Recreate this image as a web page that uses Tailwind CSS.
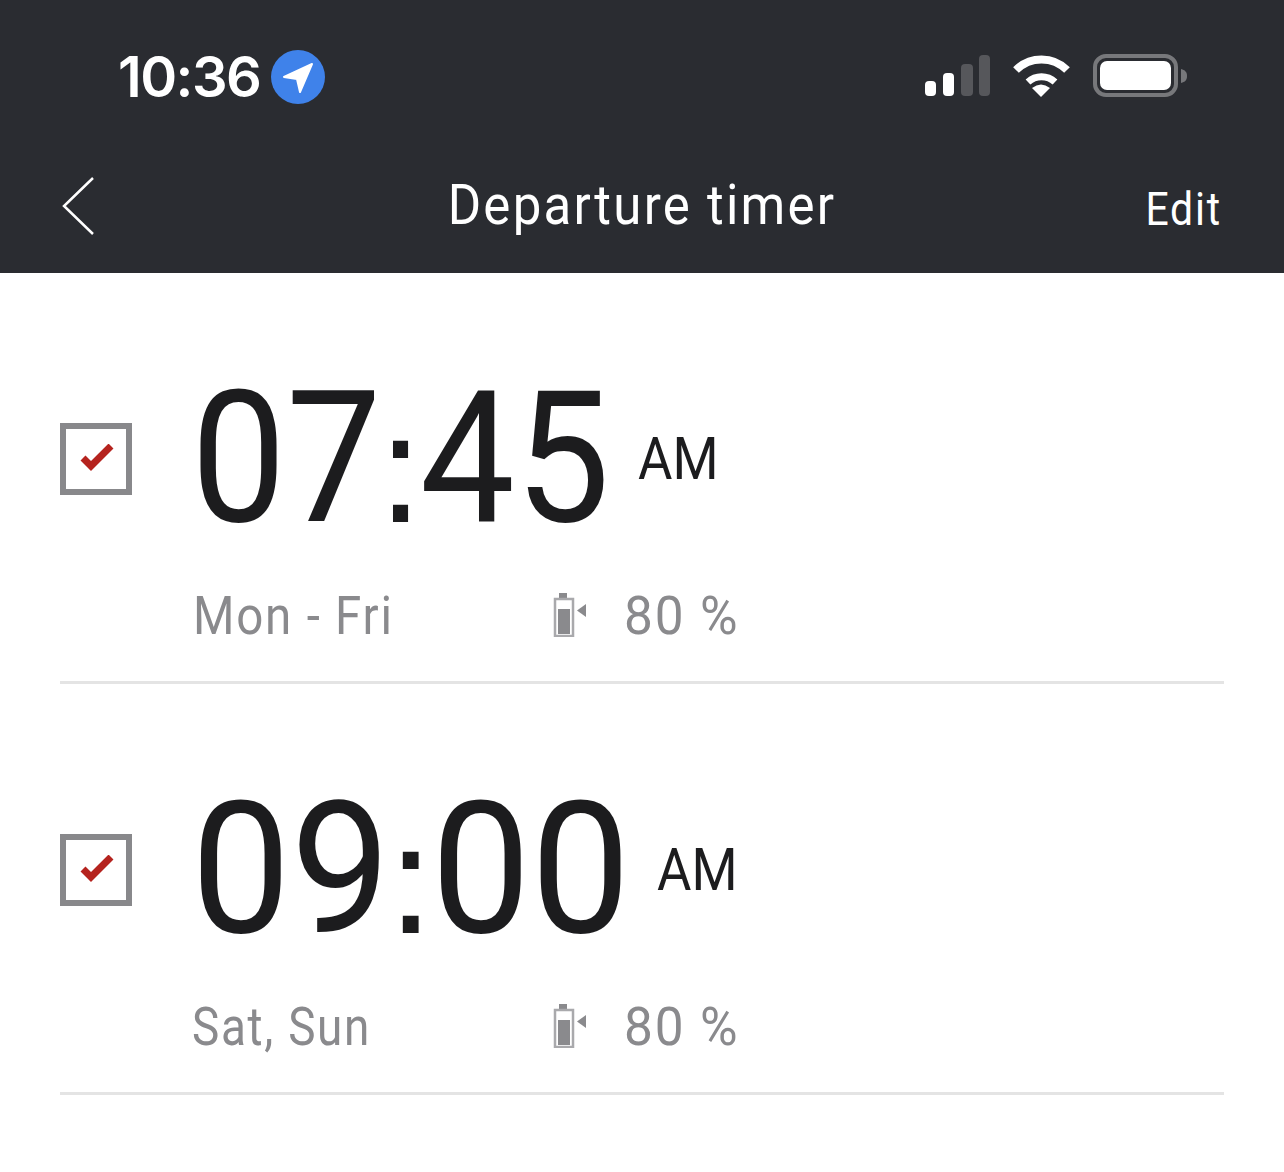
<!DOCTYPE html>
<html lang="en">

<head>
  <meta charset="UTF-8" />
  <meta name="viewport" content="width=device-width, initial-scale=1.0" />
  <script src="https://cdn.jsdelivr.net/npm/@tailwindcss/browser@4"></script>
  <title>Departure timer</title>
</head>

<body class="bg-white font-['Roboto',sans-serif] w-[1284px] h-[1172px] overflow-hidden">
  <!-- Status bar and title bar -->
  <header class="bg-[#2a2c31] h-[273px] text-white">
    <div class="h-[150px] flex justify-between pl-[118px] pr-[95px] pt-[50px]">
      <div class="flex items-start gap-[11px]">
        <span class="font-['Inter',sans-serif] font-semibold text-[56px] leading-[54px] tracking-[-1.5px]">10:36</span>
        <svg class="w-[54px] h-[54px]" viewBox="0 0 54 54">
          <circle cx="27" cy="27" r="27" fill="#3f82ea" />
          <path d="M13 27 L41 14 L29 42 L26 29 Z" fill="#fff" stroke="#fff" stroke-width="2" stroke-linejoin="round" />
        </svg>
      </div>
      <div class="flex items-start gap-[22px] pt-[4px]">
        <svg class="w-[66px] h-[44px]" viewBox="0 0 66 44">
          <rect x="0" y="27" width="11" height="15" rx="4" fill="#fff" />
          <rect x="18" y="19" width="11" height="23" rx="4" fill="#fff" />
          <rect x="36" y="10" width="12" height="32" rx="4" fill="#56575b" />
          <rect x="54" y="1" width="11" height="41" rx="4" fill="#56575b" />
        </svg>
        <svg class="w-[58px] h-[44px]" viewBox="0 0 58 44">
          <path d="M3 16 A36 36 0 0 1 54 16" fill="none" stroke="#fff" stroke-width="8" />
          <path d="M15 28 A20 20 0 0 1 42 28" fill="none" stroke="#fff" stroke-width="7" />
          <path d="M19 34 Q28 27 37 34 L28 43 Z" fill="#fff" />
        </svg>
        <svg class="w-[96px] h-[44px]" viewBox="0 0 96 44">
          <rect x="2" y="2" width="81" height="39" rx="11" fill="none" stroke="#77787b" stroke-width="4" />
          <rect x="7" y="7" width="71" height="29" rx="7" fill="#fff" />
          <path d="M88 15 C92 16 94 18 94 22 C94 26 92 28 88 29 Z" fill="#77787b" />
        </svg>
      </div>
    </div>
    <div class="relative flex items-center justify-between pl-[61px] pr-[62px] h-[110px]">
      <svg class="w-[36px] h-[60px] mt-[2px]" viewBox="0 0 36 60">
        <path d="M32 2 L3 30 L32 58" fill="none" stroke="#fff" stroke-width="2.5" />
      </svg>
      <h1 class="absolute left-0 right-0 top-0 text-center text-[56px] leading-[110px] font-normal tracking-[2.5px] origin-center scale-x-[0.91]">Departure timer</h1>
      <span class="text-[46px] font-normal tracking-[2px] leading-[110px] pt-[8px] origin-right scale-x-[0.89]">Edit</span>
    </div>
  </header>

  <main class="px-[60px]">
    <!-- Timer rows -->
    <section class="h-[411px] border-b-[3px] border-[#e4e4e4] pt-[106px]">
      <div class="flex items-center h-[160px]">
        <span class="w-[72px] h-[72px] border-[6px] border-[#88888b] flex items-center justify-center shrink-0">
          <svg class="w-[36px] h-[30px]" viewBox="0 0 36 30"><path d="M5 14 L13 22 L33 2" fill="none" stroke="#b5231e" stroke-width="7" /></svg>
        </span>
        <span class="w-[447px] ml-[59px] mt-[4px] text-[183px] leading-[160px] font-normal text-[#1c1c1e] origin-left scale-x-[0.925] whitespace-nowrap">07<span class="font-['Liberation_Sans',sans-serif] text-[150px] leading-none [-webkit-text-stroke:2px_#1c1c1e]">:</span>45</span>
        <span class="text-[60px] leading-[60px] font-normal text-[#1c1c1e] origin-left scale-x-[0.88]">AM</span>
      </div>
      <div class="flex items-center h-[60px] mt-[46px] pl-[133px] text-[#8a8a8d] text-[54px] font-normal tracking-[2px]">
        <span class="w-[358px] origin-left scale-x-[0.88] whitespace-nowrap">Mon - Fri</span>
        <svg class="w-[36px] h-[44px] ml-[2px]" viewBox="0 0 36 44">
          <rect x="6" y="0" width="8" height="6" fill="#8a8a8d" />
          <rect x="2" y="6" width="18" height="37" fill="none" stroke="#a9a9ac" stroke-width="2.5" />
          <rect x="5" y="16" width="12" height="25" fill="#8a8a8d" />
          <path d="M33 11 L33 24 L24 17.5 Z" fill="#8a8a8d" />
        </svg>
        <span class="ml-[35px] origin-left scale-x-[0.95] whitespace-nowrap">80 %</span>
      </div>
    </section>

    <section class="h-[411px] border-b-[3px] border-[#e4e4e4] pt-[106px]">
      <div class="flex items-center h-[160px]">
        <span class="w-[72px] h-[72px] border-[6px] border-[#88888b] flex items-center justify-center shrink-0">
          <svg class="w-[36px] h-[30px]" viewBox="0 0 36 30"><path d="M5 14 L13 22 L33 2" fill="none" stroke="#b5231e" stroke-width="7" /></svg>
        </span>
        <span class="w-[466px] ml-[59px] mt-[4px] text-[183px] leading-[160px] font-normal text-[#1c1c1e] origin-left scale-x-[0.97] whitespace-nowrap">09<span class="font-['Liberation_Sans',sans-serif] text-[150px] leading-none [-webkit-text-stroke:2px_#1c1c1e]">:</span>00</span>
        <span class="text-[60px] leading-[60px] font-normal text-[#1c1c1e] origin-left scale-x-[0.88]">AM</span>
      </div>
      <div class="flex items-center h-[60px] mt-[46px] pl-[132px] text-[#8a8a8d] text-[54px] font-normal tracking-[2px]">
        <span class="w-[359px] origin-left scale-x-[0.85] whitespace-nowrap">Sat, Sun</span>
        <svg class="w-[36px] h-[44px] ml-[2px]" viewBox="0 0 36 44">
          <rect x="6" y="0" width="8" height="6" fill="#8a8a8d" />
          <rect x="2" y="6" width="18" height="37" fill="none" stroke="#a9a9ac" stroke-width="2.5" />
          <rect x="5" y="16" width="12" height="25" fill="#8a8a8d" />
          <path d="M33 11 L33 24 L24 17.5 Z" fill="#8a8a8d" />
        </svg>
        <span class="ml-[35px] origin-left scale-x-[0.95] whitespace-nowrap">80 %</span>
      </div>
    </section>
  </main>
</body>

</html>
